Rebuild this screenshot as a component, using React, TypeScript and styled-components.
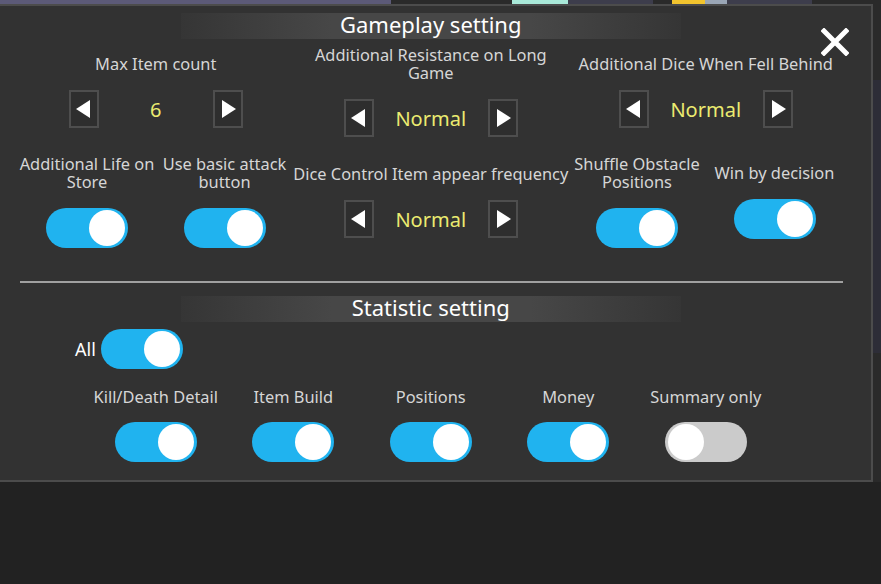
import styled, { createGlobalStyle } from "styled-components";

const Global = createGlobalStyle`
  html, body {
    margin: 0;
    padding: 0;
    background: #222222;
    font-family: "Noto Sans", "Open Sans", sans-serif;
    overflow: hidden;
  }
`;

const Styles = {
  Screen: styled.div`
    width: 881px;
    height: 584px;
    display: flex;
    flex-direction: column;
    background: #222222;
  `,
  BackStrip: styled.div`
    height: 4px;
    display: flex;
  `,
  Segment: styled.div<{ $w: number; $c: string }>`
    width: ${(p) => p.$w}px;
    flex-shrink: 0;
    background: ${(p) => p.$c};
  `,
  Body: styled.div`
    display: flex;
  `,
  Side: styled.div`
    flex: 1;
    display: flex;
    flex-direction: column;
    background: #2a2a2a;
  `,
  SideBlock: styled.div`
    margin-top: 76px;
    height: 273px;
    background: #2d2d37;
  `,
  Panel: styled.section`
    position: relative;
    width: 873px;
    height: 478px;
    box-sizing: border-box;
    flex-shrink: 0;
    background: #323232;
    border: 2px solid #4c4c4c;
    border-left: none;
    padding: 0 28px 0 18.5px;
    display: flex;
    flex-direction: column;
  `,
  Heading: styled.h2<{ $top: number }>`
    margin: ${(p) => p.$top}px auto 0;
    width: 500px;
    height: 26px;
    line-height: 23px;
    text-align: center;
    font-size: 22px;
    font-weight: 400;
    color: #ffffff;
    background: linear-gradient(
      to right,
      rgba(72, 72, 72, 0.15) 0%,
      #474747 30%,
      #474747 70%,
      rgba(72, 72, 72, 0.15) 100%
    );
  `,
  Close: styled.button`
    position: absolute;
    top: 22px;
    right: 22px;
    width: 28px;
    height: 28px;
    padding: 0;
    border: none;
    background: none;
    display: flex;
  `,
  Grid: styled.div<{ $top: number; $cols: number }>`
    margin-top: ${(p) => p.$top}px;
    display: grid;
    grid-template-columns: repeat(${(p) => p.$cols}, 137.5px);
    justify-content: center;
  `,
  Cell: styled.div<{ $span?: number; $gap?: number }>`
    grid-column: span ${(p) => p.$span ?? 1};
    display: flex;
    flex-direction: column;
    align-items: center;
    justify-content: center;
    gap: ${(p) => p.$gap ?? 17}px;
  `,
  Label: styled.div`
    font-size: 16.4px;
    line-height: 18px;
    color: #d6d6d6;
    text-align: center;
    white-space: nowrap;
  `,
  Stepper: styled.div`
    width: 174px;
    height: 38px;
    display: flex;
    align-items: center;
    justify-content: space-between;
  `,
  Arrow: styled.button<{ $dir: "left" | "right" }>`
    width: 30px;
    height: 38px;
    box-sizing: border-box;
    padding: 0;
    border: 2px solid #4e4e4e;
    background: #2e2e2e;
    display: flex;
    align-items: center;
    justify-content: center;

    &::after {
      content: "";
      width: 0;
      height: 0;
      border-top: 9px solid transparent;
      border-bottom: 9px solid transparent;
      ${(p) =>
        p.$dir === "left"
          ? "border-right: 14px solid #ffffff; margin-left: -2px;"
          : "border-left: 14px solid #ffffff; margin-left: 2px;"}
    }
  `,
  Value: styled.span`
    font-size: 20px;
    color: #ebeb70;
  `,
  Toggle: styled.div<{ $on: boolean }>`
    width: 82px;
    height: 40px;
    box-sizing: border-box;
    border-radius: 20px;
    padding: 2px 3px;
    background: ${(p) => (p.$on ? "#20b3ef" : "#cbcbcb")};
    display: flex;
    align-items: center;
    justify-content: ${(p) => (p.$on ? "flex-end" : "flex-start")};

    &::after {
      content: "";
      width: 36px;
      height: 36px;
      border-radius: 50%;
      background: #ffffff;
    }
  `,
  Divider: styled.hr`
    margin: 33px 0 0 1.5px;
    width: 823px;
    height: 2px;
    border: none;
    background: #a0a0a0;
  `,
  AllRow: styled.div`
    margin: 7px 0 0 56.5px;
    display: flex;
    align-items: center;
    gap: 5px;
  `,
  AllLabel: styled.span`
    font-size: 18px;
    color: #ffffff;
  `,
};

const strip: [number, string][] = [
  [391, "#5c5a78"],
  [121, "#2a2a2a"],
  [56, "#a9e9d9"],
  [85, "#3d3d4c"],
  [19, "#2a2a2a"],
  [33, "#f2c42e"],
  [22, "#9aa6b6"],
  [85, "#3d3d4c"],
  [69, "#2a2a2a"],
];

const Stepper = ({ value }: { value: string }) => (
  <Styles.Stepper>
    <Styles.Arrow $dir="left" aria-label="previous" />
    <Styles.Value>{value}</Styles.Value>
    <Styles.Arrow $dir="right" aria-label="next" />
  </Styles.Stepper>
);

const stats: [string, boolean][] = [
  ["Kill/Death Detail", true],
  ["Item Build", true],
  ["Positions", true],
  ["Money", true],
  ["Summary only", false],
];

export default function App() {
  return (
    <Styles.Screen>
      <Global />
      <Styles.BackStrip>
        {strip.map(([w, c], i) => (
          <Styles.Segment key={i} $w={w} $c={c} />
        ))}
      </Styles.BackStrip>
      <Styles.Body>
        <Styles.Panel>
          <Styles.Heading $top={7}>Gameplay setting</Styles.Heading>
          <Styles.Close aria-label="close">
            <svg width="28" height="28" viewBox="0 0 28 28">
              <path
                d="M3 3 L25 25 M25 3 L3 25"
                stroke="#ffffff"
                strokeWidth="5"
                strokeLinecap="square"
              />
            </svg>
          </Styles.Close>

          <Styles.Grid $top={7} $cols={6}>
            <Styles.Cell $span={2}>
              <Styles.Label>Max Item count</Styles.Label>
              <Stepper value="6" />
            </Styles.Cell>
            <Styles.Cell $span={2}>
              <Styles.Label>
                Additional Resistance on Long
                <br />
                Game
              </Styles.Label>
              <Stepper value="Normal" />
            </Styles.Cell>
            <Styles.Cell $span={2}>
              <Styles.Label>Additional Dice When Fell Behind</Styles.Label>
              <Stepper value="Normal" />
            </Styles.Cell>
          </Styles.Grid>

          <Styles.Grid $top={18} $cols={6}>
            <Styles.Cell>
              <Styles.Label>
                Additional Life on
                <br />
                Store
              </Styles.Label>
              <Styles.Toggle $on />
            </Styles.Cell>
            <Styles.Cell>
              <Styles.Label>
                Use basic attack
                <br />
                button
              </Styles.Label>
              <Styles.Toggle $on />
            </Styles.Cell>
            <Styles.Cell $span={2}>
              <Styles.Label>Dice Control Item appear frequency</Styles.Label>
              <Stepper value="Normal" />
            </Styles.Cell>
            <Styles.Cell>
              <Styles.Label>
                Shuffle Obstacle
                <br />
                Positions
              </Styles.Label>
              <Styles.Toggle $on />
            </Styles.Cell>
            <Styles.Cell>
              <Styles.Label>Win by decision</Styles.Label>
              <Styles.Toggle $on />
            </Styles.Cell>
          </Styles.Grid>

          <Styles.Divider />

          <Styles.Heading $top={13}>Statistic setting</Styles.Heading>

          <Styles.AllRow>
            <Styles.AllLabel>All</Styles.AllLabel>
            <Styles.Toggle $on />
          </Styles.AllRow>

          <Styles.Grid $top={19} $cols={5}>
            {stats.map(([name, on]) => (
              <Styles.Cell key={name} $gap={16}>
                <Styles.Label>{name}</Styles.Label>
                <Styles.Toggle $on={on} />
              </Styles.Cell>
            ))}
          </Styles.Grid>
        </Styles.Panel>
        <Styles.Side>
          <Styles.SideBlock />
        </Styles.Side>
      </Styles.Body>
    </Styles.Screen>
  );
}
